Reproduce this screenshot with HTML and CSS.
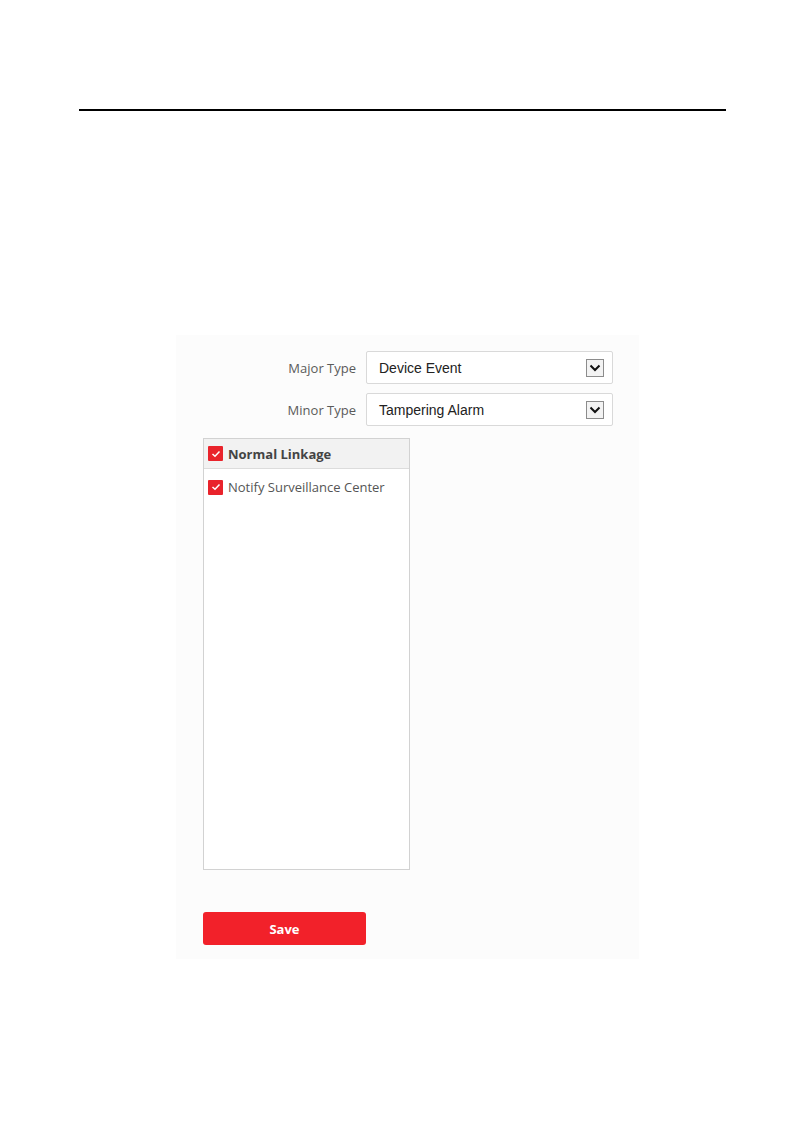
FILE: index.html
```html
<!DOCTYPE html>
<html lang="en">
<head>
    <meta charset="UTF-8">
    <title>Linkage Action</title>
    <link rel="stylesheet" href="styles.css">
</head>
<body>
    <div class="rule"></div>

    <div class="panel">
        <div class="row">
            <label class="label">Major Type</label>
            <div class="select">
                <span>Device Event</span>
                <span class="arrow">
                    <svg width="12" height="8" viewBox="0 0 12 8"><path d="M1.5 1.5 L6 6 L10.5 1.5" fill="none" stroke="#111" stroke-width="2"/></svg>
                </span>
            </div>
        </div>
        <div class="row">
            <label class="label">Minor Type</label>
            <div class="select">
                <span>Tampering Alarm</span>
                <span class="arrow">
                    <svg width="12" height="8" viewBox="0 0 12 8"><path d="M1.5 1.5 L6 6 L10.5 1.5" fill="none" stroke="#111" stroke-width="2"/></svg>
                </span>
            </div>
        </div>

        <div class="linkage">
            <div class="linkage-head">
                <span class="check"><svg width="10" height="8" viewBox="0 0 10 8"><path d="M1.5 4 L4 6.3 L8.5 1.5" fill="none" stroke="#fff" stroke-width="1.5"/></svg></span>
                <span>Normal Linkage</span>
            </div>
            <div class="linkage-item">
                <span class="check"><svg width="10" height="8" viewBox="0 0 10 8"><path d="M1.5 4 L4 6.3 L8.5 1.5" fill="none" stroke="#fff" stroke-width="1.5"/></svg></span>
                <span>Notify Surveillance Center</span>
            </div>
        </div>

        <button class="save">Save</button>
    </div>
</body>
</html>
```

FILE: styles.css
```css
body {
    margin: 0;
    background: #fff;
    font-family: "Open Sans", "Liberation Sans", sans-serif;
}
.rule {
    margin: 109px 0 0 79px;
    width: 647px;
    height: 2px;
    background: #000;
}
.panel {
    margin: 224px 0 0 176px;
    width: 463px;
    height: 624px;
    box-sizing: border-box;
    padding: 16px 0 0 27px;
    background: #fcfcfc;
}
.row {
    display: flex;
    align-items: center;
    margin-bottom: 9px;
}
.label {
    width: 153px;
    margin-right: 10px;
    text-align: right;
    font-size: 13px;
    color: #5a5a5a;
}
.select {
    width: 247px;
    height: 33px;
    box-sizing: border-box;
    border: 1px solid #d9d9d9;
    border-radius: 2px;
    background: #fff;
    display: flex;
    align-items: center;
    justify-content: space-between;
    padding: 0 8px 0 12px;
    font-family: "Liberation Sans", Arial, sans-serif;
    font-size: 14px;
    color: #222;
}
.arrow {
    width: 18px;
    height: 18px;
    box-sizing: border-box;
    border: 1px solid #8c8c8c;
    background: #f3f3f3;
    display: flex;
    align-items: center;
    justify-content: center;
}
.linkage {
    margin-top: 12px;
    width: 207px;
    height: 432px;
    box-sizing: border-box;
    border: 1px solid #d2d2d2;
    background: #fff;
}
.linkage-head {
    height: 29px;
    background: #f2f2f2;
    border-bottom: 1px solid #dcdcdc;
    display: flex;
    align-items: center;
    padding-left: 4px;
    font-size: 13px;
    font-weight: bold;
    color: #444;
}
.linkage-item {
    display: flex;
    align-items: center;
    padding: 9px 0 0 4px;
    font-size: 13px;
    color: #555;
}
.check {
    width: 15px;
    height: 15px;
    margin-right: 5px;
    background: #e9232b;
    border-radius: 1px;
    display: flex;
    align-items: center;
    justify-content: center;
}
.save {
    display: block;
    margin-top: 42px;
    width: 163px;
    height: 33px;
    border: none;
    border-radius: 3px;
    background: #f2212a;
    color: #fff;
    font-family: "Open Sans", "Liberation Sans", sans-serif;
    font-size: 13px;
    font-weight: bold;
}
```
